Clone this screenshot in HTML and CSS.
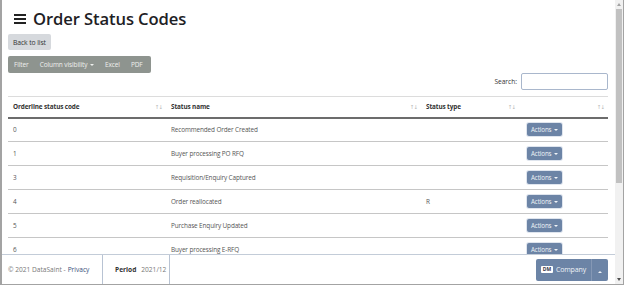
FILE: index.html
```html
<!DOCTYPE html>
<html lang="en">
<head>
<meta charset="UTF-8">
<meta name="viewport" content="width=device-width, initial-scale=1.0">
<title>Order Status Codes</title>
<link rel="stylesheet" href="styles.css">
</head>
<body>

<div class="window">
    <div class="page">
        <div class="content">
            <h1 class="title">
                <span class="burger"><i></i><i></i><i></i></span>
                Order Status Codes
            </h1>
            <button class="btn-back">Back to list</button>

            <div class="dt-buttons">
                <button>Filter</button>
                <button>Column visibility <span class="caret"></span></button>
                <button>Excel</button>
                <button>PDF</button>
            </div>

            <div class="dt-search">
                <label for="search">Search:</label>
                <input type="text" id="search">
            </div>

            <table class="grid">
                <thead>
                    <tr>
                        <th class="col-code">Orderline status code<span class="sort">&#8593;&#8595;</span></th>
                        <th class="col-name">Status name<span class="sort">&#8593;&#8595;</span></th>
                        <th class="col-type">Status type<span class="sort">&#8593;&#8595;</span></th>
                        <th class="col-act"><span class="sort">&#8593;&#8595;</span></th>
                    </tr>
                </thead>
                <tbody>
                    <tr><td>0</td><td>Recommended Order Created</td><td></td><td><button class="btn-actions">Actions <span class="caret"></span></button></td></tr>
                    <tr><td>1</td><td>Buyer processing PO RFQ</td><td></td><td><button class="btn-actions">Actions <span class="caret"></span></button></td></tr>
                    <tr><td>3</td><td>Requisition/Enquiry Captured</td><td></td><td><button class="btn-actions">Actions <span class="caret"></span></button></td></tr>
                    <tr><td>4</td><td>Order reallocated</td><td>R</td><td><button class="btn-actions">Actions <span class="caret"></span></button></td></tr>
                    <tr><td>5</td><td>Purchase Enquiry Updated</td><td></td><td><button class="btn-actions">Actions <span class="caret"></span></button></td></tr>
                    <tr><td>6</td><td>Buyer processing E-RFQ</td><td></td><td><button class="btn-actions">Actions <span class="caret"></span></button></td></tr>
                </tbody>
            </table>
        </div>

        <footer class="footer">
            <div class="foot-copy">&copy; 2021 DataSaint - <a href="#">Privacy</a></div>
            <div class="foot-period"><b>Period</b> 2021/12</div>
            <div class="foot-fill"></div>
            <div class="company">
                <button class="company-main"><span class="badge">DM</span> Company</button>
                <button class="company-toggle"><span class="caret-up"></span></button>
            </div>
        </footer>
    </div>

    <div class="scrollbar">
        <div class="arrow-up"></div>
        <div class="thumb"></div>
        <div class="track"></div>
        <div class="arrow-down"></div>
    </div>
</div>

</body>
</html>
```

FILE: styles.css
```css
* {
    box-sizing: border-box;
}
body {
    margin: 0;
    padding: 0;
    font-family: "Open Sans", "Noto Sans", sans-serif;
    background-color: #fff;
    color: #555;
}
.window {
    display: flex;
    width: 624px;
    height: 285px;
    border-left: 2px solid #a3a3a3;
    border-right: 1px solid #a3a3a3;
    border-bottom: 1px solid #a3a3a3;
    overflow: hidden;
}
.page {
    flex: 1;
    position: relative;
    overflow: hidden;
}
.content {
    padding: 0 7px 0 6px;
}
.title {
    display: flex;
    align-items: center;
    margin: 0;
    height: 34px;
    padding-top: 2px;
    font-size: 16.6px;
    font-weight: 600;
    color: #1e2125;
    letter-spacing: -0.1px;
}
.burger {
    display: flex;
    flex-direction: column;
    gap: 2px;
    width: 12px;
    margin: 2px 7px 0 6px;
}
.burger i {
    display: block;
    height: 2px;
    background-color: #222;
}
.btn-back {
    display: block;
    height: 16px;
    padding: 0 5px;
    margin: 0;
    border: none;
    border-radius: 2px;
    background-color: #d6d9dd;
    color: #333;
    font-family: inherit;
    font-size: 6.8px;
    letter-spacing: -0.1px;
}
.dt-buttons {
    display: flex;
    width: 143px;
    height: 17px;
    margin-top: 6px;
    background-color: #8e948f;
    border-radius: 2px;
}
.dt-buttons button {
    padding: 0 5.5px;
    border: none;
    background: none;
    color: #eef0ee;
    font-family: inherit;
    font-size: 6.5px;
    letter-spacing: -0.1px;
    white-space: nowrap;
}
.dt-buttons button:first-child {
    padding-left: 6px;
}
.caret {
    display: inline-block;
    width: 0;
    height: 0;
    margin-left: 1px;
    vertical-align: 1px;
    border-top: 2.5px solid currentColor;
    border-left: 2.5px solid transparent;
    border-right: 2.5px solid transparent;
}
.dt-search {
    display: flex;
    justify-content: flex-end;
    align-items: center;
    gap: 4px;
    height: 17px;
    font-size: 6.6px;
    color: #333;
}
.dt-search input {
    width: 87px;
    height: 17px;
    border: 1px solid #a9b7cc;
    border-radius: 2px;
}
.grid {
    width: 100%;
    margin-top: 6px;
    border-collapse: collapse;
    font-size: 6.4px;
    letter-spacing: -0.12px;
}
.grid th {
    position: relative;
    height: 21px;
    padding: 0 5px;
    text-align: left;
    font-weight: 700;
    color: #333;
    border-top: 1px solid #dcdcdc;
    border-bottom: 2px solid #6c6c6c;
}
.grid .sort {
    position: absolute;
    right: 4px;
    top: 7px;
    font-family: "DejaVu Sans", sans-serif;
    font-size: 5.5px;
    font-weight: 400;
    color: #b5b5b5;
    letter-spacing: -1px;
}
.grid .col-code {
    width: 158px;
}
.grid .col-name {
    width: 255px;
}
.grid .col-type {
    width: 98px;
}
.grid td {
    height: 24px;
    padding: 0 5px;
    border-bottom: 1px solid #c6c6c6;
    color: #555;
}
.grid td:last-child {
    padding-left: 8px;
}
.btn-actions {
    height: 13px;
    width: 35px;
    padding: 0;
    border: none;
    border-radius: 2px;
    background-color: #6c84a6;
    color: #f1f4f8;
    font-family: inherit;
    font-size: 6.2px;
    letter-spacing: -0.1px;
    box-shadow: 0 0 0 1px #dfe5ee;
}
.footer {
    position: absolute;
    left: 0;
    right: 0;
    bottom: 0;
    display: flex;
    height: 30px;
    background-color: #fff;
    border-top: 1px solid #c3ccd8;
    font-size: 6.6px;
    color: #777;
}
.footer > div {
    display: flex;
    align-items: center;
}
.foot-copy {
    width: 101px;
    padding-left: 6px;
    border-right: 1px solid #b8c3d3;
}
.foot-copy a {
    color: #3b4f7a;
    text-decoration: none;
    margin-left: 2px;
}
.foot-period {
    width: 67px;
    padding-left: 12px;
    border-right: 1px solid #b8c3d3;
}
.foot-period b {
    color: #333;
    margin-right: 5px;
}
.foot-fill {
    flex: 1;
}
.company {
    display: flex;
    margin-right: 7px;
}
.company button {
    height: 22px;
    border: none;
    background-color: #6c84a6;
    color: #eef2f7;
    font-family: inherit;
}
.company-main {
    display: flex;
    align-items: center;
    gap: 3px;
    padding: 0 5px;
    border-radius: 2px 0 0 2px;
    font-size: 7px;
    letter-spacing: -0.15px;
    white-space: nowrap;
}
.company-toggle {
    width: 17px;
    border-left: 1px solid #8598b5 !important;
    border-radius: 0 2px 2px 0;
}
.badge {
    padding: 0 2px;
    background-color: #fff;
    color: #334;
    border-radius: 1px;
    font-size: 5px;
    font-weight: 700;
    line-height: 7px;
}
.caret-up {
    display: inline-block;
    width: 0;
    height: 0;
    border-bottom: 2.5px solid #eef2f7;
    border-left: 2.5px solid transparent;
    border-right: 2.5px solid transparent;
    vertical-align: 2px;
}
.scrollbar {
    display: flex;
    flex-direction: column;
    width: 8px;
    background-color: #f1f1f1;
}
.arrow-up, .arrow-down {
    height: 9px;
    display: flex;
    justify-content: center;
    align-items: center;
}
.arrow-up::after {
    content: "";
    border-bottom: 3px solid #a3a3a3;
    border-left: 2.5px solid transparent;
    border-right: 2.5px solid transparent;
}
.arrow-down::after {
    content: "";
    border-top: 3px solid #505050;
    border-left: 2.5px solid transparent;
    border-right: 2.5px solid transparent;
}
.thumb {
    height: 174px;
    margin: 0 1px;
    background-color: #c1c1c1;
}
.track {
    flex: 1;
}
```
